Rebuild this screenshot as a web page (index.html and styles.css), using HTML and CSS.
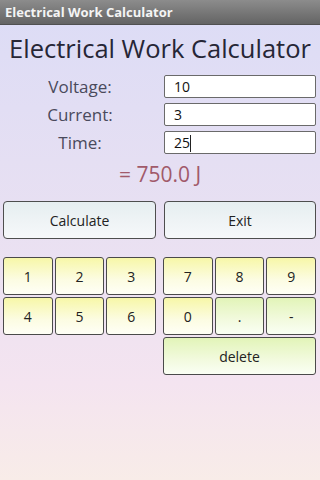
FILE: index.html
```html
<!DOCTYPE html>
<html lang="en">
<head>
    <meta charset="UTF-8">
    <meta name="viewport" content="width=device-width, initial-scale=1.0">
    <title>Electrical Work Calculator</title>
    <link rel="stylesheet" href="styles.css">
</head>
<body>
    <div class="title-bar">Electrical Work Calculator</div>

    <h1 class="heading">Electrical Work Calculator</h1>

    <div class="form">
        <label class="label" for="voltage">Voltage:</label>
        <input class="field" type="text" id="voltage" value="10">
        <label class="label" for="current">Current:</label>
        <input class="field" type="text" id="current" value="3">
        <label class="label" for="time">Time:</label>
        <div class="field">25<span class="cursor"></span></div>
    </div>

    <div class="result">= 750.0 J</div>

    <div class="actions">
        <button class="btn">Calculate</button>
        <button class="btn">Exit</button>
    </div>

    <div class="keypad">
        <div class="keys">
            <button class="key">1</button>
            <button class="key">2</button>
            <button class="key">3</button>
            <button class="key">4</button>
            <button class="key">5</button>
            <button class="key">6</button>
        </div>
        <div class="keys">
            <button class="key">7</button>
            <button class="key">8</button>
            <button class="key">9</button>
            <button class="key">0</button>
            <button class="key green">.</button>
            <button class="key green">-</button>
            <button class="key green wide">delete</button>
        </div>
    </div>
</body>
</html>
```

FILE: styles.css
```css
body {
    margin: 0;
    height: 480px;
    overflow: hidden;
    font-family: 'Open Sans', 'DejaVu Sans', sans-serif;
    background: linear-gradient(to bottom, #dcdcf6 0%, #e8e0f2 45%, #f4e4f0 80%, #f8ece8 100%);
}

.title-bar {
    height: 25px;
    line-height: 24px;
    padding-left: 5px;
    font-size: 13px;
    font-weight: bold;
    color: #f4f4f4;
    background: linear-gradient(to bottom, #8c8c8c, #646464);
    border-bottom: 1px solid #505050;
    box-sizing: border-box;
}

.heading {
    margin: 6px 0 0;
    font-size: 25.5px;
    font-weight: normal;
    line-height: 34px;
    text-align: center;
    color: #262636;
}

.form {
    display: grid;
    grid-template-columns: 160px 152px;
    column-gap: 4px;
    row-gap: 5px;
    margin-top: 10px;
}

.label {
    text-align: center;
    font-size: 17px;
    line-height: 23px;
    color: #4a4a5c;
}

.field {
    height: 23px;
    box-sizing: border-box;
    margin: 0;
    padding: 0 9px;
    font-family: inherit;
    font-size: 14px;
    line-height: 21px;
    color: #111;
    background: #ffffff;
    border: 1px solid #6a6a6a;
    border-radius: 2px;
    outline: none;
}

.cursor {
    display: inline-block;
    width: 1px;
    height: 17px;
    vertical-align: -4px;
    background: #222;
}

.result {
    margin-top: 7px;
    font-size: 21px;
    line-height: 26px;
    text-align: center;
    color: #a15a6a;
}

.actions {
    display: grid;
    grid-template-columns: 153px 152px;
    column-gap: 8px;
    padding-left: 3px;
    margin-top: 14px;
}

.btn {
    height: 38px;
    font-family: inherit;
    font-size: 14px;
    color: #222;
    background: linear-gradient(to bottom, #e6eef0, #f6f8fa);
    border: 1.5px solid #4e4e4e;
    border-radius: 4px;
}

.keypad {
    display: grid;
    grid-template-columns: 153px 153px;
    column-gap: 7px;
    padding-left: 3px;
    margin-top: 18px;
}

.keys {
    display: grid;
    grid-template-columns: repeat(3, 1fr);
    grid-auto-rows: 38px;
    gap: 2px;
}

.key {
    font-family: inherit;
    font-size: 14px;
    color: #222;
    background: linear-gradient(to bottom, #f7f7a8, #fcfce2 60%, #fffff6);
    border: 1.5px solid #4a4a4a;
    border-radius: 3px;
}

.key.green {
    background: linear-gradient(to bottom, #e2f4b8, #f2fade 60%, #fafff4);
}

.key.wide {
    grid-column: span 3;
}
```
